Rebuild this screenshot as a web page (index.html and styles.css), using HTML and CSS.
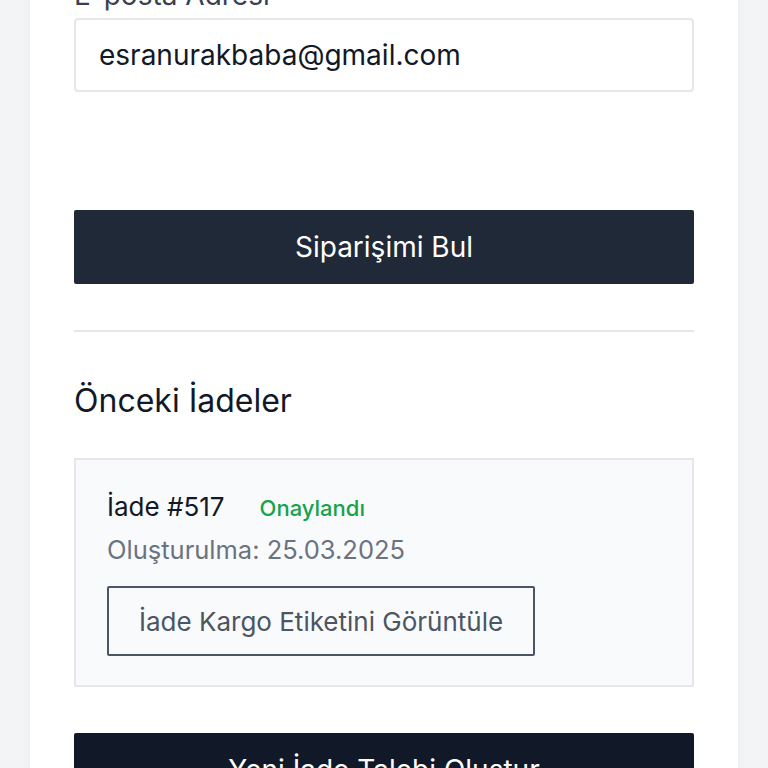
FILE: index.html
```html
<!DOCTYPE html>
<html lang="tr">
<head>
<meta charset="utf-8">
<title>İade Talebi</title>
<link rel="stylesheet" href="styles.css">
</head>
<body>
<main class="page">
  <label class="label" for="email">E-posta Adresi</label>
  <div class="input" id="email">esranurakbaba@gmail.com</div>
  <button class="btn btn-primary find">Siparişimi Bul</button>
  <hr class="divider">
  <h2 class="heading">Önceki İadeler</h2>
  <section class="return-card">
    <div class="return-head">
      <span class="return-id">İade #517</span>
      <span class="status">Onaylandı</span>
    </div>
    <div class="return-date">Oluşturulma: 25.03.2025</div>
    <button class="btn-outline">İade Kargo Etiketini Görüntüle</button>
  </section>
  <button class="btn btn-dark new">Yeni İade Talebi Oluştur</button>
</main>
</body>
</html>
```
FILE: styles.css
```css
html, body {
  margin: 0;
  padding: 0;
  background: #f3f4f6;
  font-family: Inter, "Noto Sans", "Liberation Sans", sans-serif;
  color: #111827;
  overflow: hidden;
}
.page {
  margin: -23px 30px 0;
  background: #ffffff;
  padding: 0 44px 80px;
  box-shadow: 0 0 8px rgba(0,0,0,0.04);
  display: flex;
  flex-direction: column;
}
.label {
  display: block;
  font-size: 28px;
  line-height: 36px;
  color: #374151;
  margin-bottom: 5px;
}
.input {
  height: 74px;
  box-sizing: border-box;
  border: 2px solid #e5e7eb;
  border-radius: 4px;
  padding: 0 23px;
  display: flex;
  align-items: center;
  font-size: 28px;
  color: #111827;
}
.btn {
  height: 74px;
  border: none;
  border-radius: 2px;
  color: #ffffff;
  font-family: inherit;
  font-size: 28px;
  width: 100%;
  display: flex;
  align-items: center;
  justify-content: center;
  padding: 0;
}
.btn-primary { background: #1f2937; }
.btn-dark { background: #111827; }
.find { margin-top: 118px; }
.divider {
  margin: 46px 0 0;
  border: none;
  border-top: 2px solid #e5e7eb;
}
.heading {
  margin: 49px 0 0;
  font-size: 32px;
  line-height: 40px;
  font-weight: 400;
  color: #111827;
}
.return-card {
  margin-top: 37px;
  background: #f9fafb;
  border: 2px solid #e5e7eb;
  padding: 30px 31px 29px;
  display: flex;
  flex-direction: column;
  align-items: flex-start;
}
.return-head {
  display: flex;
  align-items: baseline;
  gap: 35px;
  font-size: 26px;
  line-height: 34px;
}
.return-id { color: #111827; }
.status {
  color: #16a34a;
  font-size: 22px;
  font-weight: 500;
}
.return-date {
  margin-top: 8px;
  font-size: 25.5px;
  line-height: 34px;
  color: #6b7280;
}
.btn-outline {
  margin-top: 19px;
  height: 70px;
  box-sizing: border-box;
  border: 2px solid #4b5563;
  border-radius: 2px;
  background: transparent;
  color: #4b5563;
  font-family: inherit;
  font-size: 26px;
  padding: 0 30px;
}
.new { margin-top: 46px; }
```
